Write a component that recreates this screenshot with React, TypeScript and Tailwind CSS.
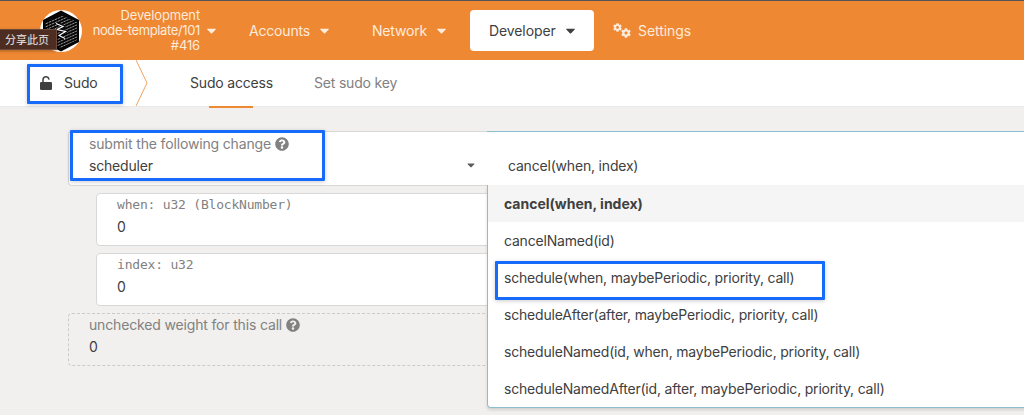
import type { ReactNode } from "react";
import { FaCaretDown, FaCog, FaQuestionCircle } from "react-icons/fa";

const OPTIONS = [
  "cancel(when, index)",
  "cancelNamed(id)",
  "schedule(when, maybePeriodic, priority, call)",
  "scheduleAfter(after, maybePeriodic, priority, call)",
  "scheduleNamed(id, when, maybePeriodic, priority, call)",
  "scheduleNamedAfter(id, after, maybePeriodic, priority, call)",
];

function ChainLogo() {
  const stripes = Array.from({ length: 16 }, (_, i) => 7 + i * 3);
  return (
    <svg className="h-[42px] w-[42px] shrink-0" viewBox="0 0 42 42">
      <defs>
        <clipPath id="hex-face">
          <path d="M21 5 37 12v18L21 38 5 30V12z" />
        </clipPath>
      </defs>
      <circle cx="21" cy="21" r="21" fill="#fff" />
      <path d="M21 0.5 39 10v22L21 41.500 3 32V10z" fill="#050505" />
      <g clipPath="url(#hex-face)" stroke="#fff" strokeWidth="0.8" strokeOpacity="0.75" strokeDasharray="2.500 0.700">
        {stripes.map((y) => (
          <path key={y} d={`M3 ${y + 2}L39 ${y - 14}`} />
        ))}
      </g>
      <path d="M17 13l6 4-6 3 8 2-6 4 5 3" fill="none" stroke="#050505" strokeWidth="3" />
      <path d="M16 13.500l7 3-6 3 8.500 2-6.500 4 6 3" fill="none" stroke="#fff" strokeWidth="1.200" />
    </svg>
  );
}

function OpenLock() {
  return (
    <svg className="h-[14px] w-3" viewBox="0 0 12 14" fill="none">
      <rect y="6" width="12" height="8" rx="1.300" fill="currentColor" />
      <path d="M3 6.500V3.800a3 3 0 0 1 5.900-.8" stroke="currentColor" strokeWidth="1.500" strokeLinecap="round" />
    </svg>
  );
}

function NavItem({ label, className }: { label: string; className: string }) {
  return (
    <div className={`flex h-[41px] items-center justify-between ${className}`}>
      <span>{label}</span>
      <FaCaretDown className="h-[15px] w-[15px]" />
    </div>
  );
}

function Field({
  label,
  value,
  className,
  mono = false,
  help = false,
  children,
}: {
  label: string;
  value: string;
  className: string;
  mono?: boolean;
  help?: boolean;
  children?: ReactNode;
}) {
  return (
    <div className={`relative flex flex-col rounded-[4px] border pl-5 ${className}`}>
      <div className="flex h-[22px] items-center gap-1 text-[#818181]">
        <span className={mono ? "font-['DejaVu_Sans_Mono',monospace] text-[13px] tracking-[-0.2px]" : "tracking-[-0.16px]"}>{label}</span>
        {help && <FaQuestionCircle className="h-[14px] w-[14px]" />}
      </div>
      <div className="flex h-[22px] items-center">{value}</div>
      {children}
    </div>
  );
}

function Marker({ className }: { className: string }) {
  return (
    <div className={`pointer-events-none absolute z-20 rounded-[1px] border-[3px] border-[#176bfb] shadow-[0_1px_4px_rgba(0,0,0,0.2)] ${className}`} />
  );
}

export default function App() {
  return (
    <div className="relative h-[415px] w-[1024px] overflow-hidden bg-[#f1f0ee] font-['Inter',sans-serif] text-[14px] leading-[22px] tracking-[-0.19px] text-[#404040]">
      <header className="flex h-[60px] items-center border-t border-[#555] bg-[#ef8832] pl-10 text-[#fdebdc]">
        <ChainLogo />
        <div className="ml-2 w-[110px] whitespace-nowrap text-right text-[13px] leading-[15px] tracking-[-0.15px]">
          <div>Development</div>
          <div className="tracking-[-0.37px]">node-template/101</div>
          <div>#416</div>
        </div>
        <FaCaretDown className="ml-1 h-[15px] w-[15px]" />
        <NavItem label="Accounts" className="ml-[30px] w-[83px]" />
        <NavItem label="Network" className="ml-10 w-[77px]" />
        <NavItem label="Developer" className="ml-[21px] w-[124px] rounded-[4px] bg-white pl-[19px] pr-4 tracking-[-0.1px] text-[#404040]" />
        <div className="ml-[19px] flex items-center gap-[7px] tracking-[-0.05px]">
          <span className="flex items-start">
            <FaCog className="h-[9px] w-[9px]" />
            <FaCog className="-ml-[1px] mt-[5px] h-[10px] w-[10px]" />
          </span>
          <span>Settings</span>
        </div>
      </header>

      <nav className="flex h-[47px] border-b border-[#e8e8e8] bg-white">
        <div className="flex w-[136px] items-center gap-3 pl-10">
          <OpenLock />
          <span>Sudo</span>
        </div>
        <svg className="h-[46px] w-3" viewBox="0 0 12 46" fill="none">
          <path d="M0 0l11 23L0 46" stroke="#f0a260" />
        </svg>
        <div className="relative ml-[42px] flex w-[82px] items-center whitespace-nowrap">
          Sudo access
          <span className="absolute -bottom-[2px] left-[19px] h-[2px] w-11 bg-[#ef8832]" />
        </div>
        <div className="ml-[42px] flex items-center text-[#818181]">Set sudo key</div>
      </nav>

      <main className="flex flex-col pl-[68px] pt-6">
        <div className="flex h-[55px] w-[960px]">
          <Field
            label="submit the following change"
            value="scheduler"
            help
            className="w-[419px] rounded-r-none border-r-0 border-[#d8d8d8] bg-white pt-[1px]"
          >
            <FaCaretDown className="absolute right-[10px] top-[27px] h-3 w-3 text-[#5c5c5c]" />
          </Field>
          <div className="relative flex-1 border-t border-[#8bbfce] bg-white pl-[21px] pt-[23px]">
            cancel(when, index)
            <div className="absolute left-0 top-[53px] z-10 w-[560px] rounded-b-[4px] border border-t-0 border-[#8bbfce] bg-white shadow-[0_2px_3px_rgba(34,36,38,0.15)]">
              {OPTIONS.map((option, i) => (
                <div
                  key={option}
                  className={`flex h-[37px] items-center whitespace-nowrap pl-4 ${i === 0 ? "bg-[#f5f5f5] font-bold tracking-normal" : ""}`}
                >
                  {option}
                </div>
              ))}
            </div>
          </div>
        </div>
        <div className="ml-7 mt-[7px] flex flex-col gap-[7px]">
          <Field label="when: u32 (BlockNumber)" value="0" mono className="h-[53px] border-[#d8d8d8] bg-white" />
          <Field label="index: u32" value="0" mono className="h-[53px] border-[#d8d8d8] bg-white" />
        </div>
        <Field label="unchecked weight for this call" value="0" help className="mt-[7px] h-[53px] border-dashed border-[#cbcbcb]" />
      </main>

      <div className="absolute -left-1 top-[29px] flex h-[21px] w-[61px] items-center border border-[#6e4a38] bg-[#4d2d22] pl-2 font-['Noto_Sans_CJK_SC',sans-serif] text-[11px] leading-none tracking-normal text-[#eee6e2] shadow-[0_1px_3px_rgba(0,0,0,0.3)]">
        分享此页
      </div>
      <Marker className="left-[27px] top-[64px] h-[40px] w-[96px]" />
      <Marker className="left-[70px] top-[130px] h-[51px] w-[255px]" />
      <Marker className="left-[495px] top-[261px] h-[39px] w-[330px]" />
    </div>
  );
}
